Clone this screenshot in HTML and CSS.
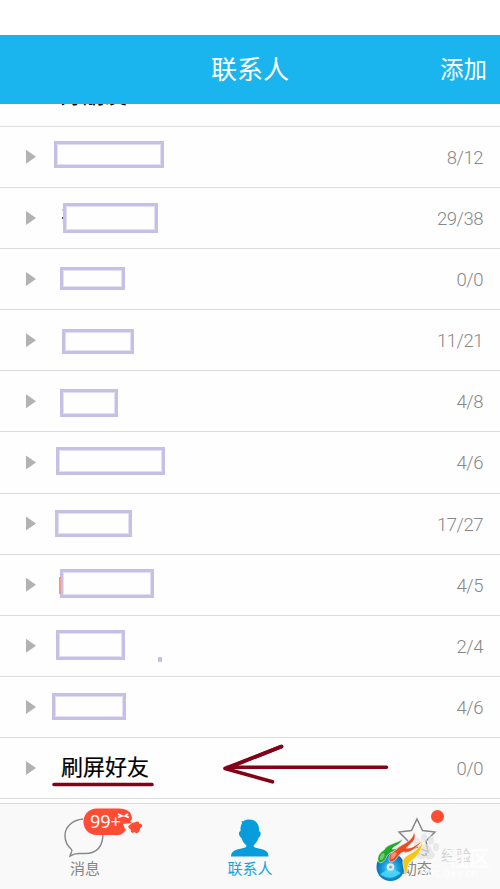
FILE: index.html
```html
<!DOCTYPE html>
<html lang="zh-CN">
<head>
<meta charset="utf-8">
<title>联系人</title>
<link rel="stylesheet" href="styles.css">
</head>
<body>
<div class="screen">
  <div class="status"></div>
  <header class="header">
    <span></span>
    <h1 class="title">联系人</h1>
    <span class="add">添加</span>
  </header>
  <main class="list">
    <div class="clipped"><span class="clipped-name">好朋友</span></div>
    <div class="row"><i class="caret"></i><span class="mask m1"></span><span class="count">8/12</span></div>
    <div class="row"><i class="caret"></i><span class="mask m2"></span><span class="count">29/38</span></div>
    <div class="row"><i class="caret"></i><span class="mask m3"></span><span class="count">0/0</span></div>
    <div class="row"><i class="caret"></i><span class="mask m4"></span><span class="count">11/21</span></div>
    <div class="row"><i class="caret"></i><span class="mask m5"></span><span class="count">4/8</span></div>
    <div class="row"><i class="caret"></i><span class="mask m6"></span><span class="count">4/6</span></div>
    <div class="row"><i class="caret"></i><span class="mask m7"></span><span class="count">17/27</span></div>
    <div class="row"><i class="caret"></i><span class="mask m8"></span><span class="count">4/5</span></div>
    <div class="row"><i class="caret"></i><span class="mask m9"></span><span class="count">2/4</span></div>
    <div class="row"><i class="caret"></i><span class="mask m10"></span><span class="count">4/6</span></div>
    <div class="row"><i class="caret"></i><span class="name">刷屏好友</span><span class="count">0/0</span>
      <svg class="arrow" viewBox="0 0 350 60" fill="none" stroke="#840218" stroke-width="3.6" stroke-linecap="round" stroke-linejoin="round">
        <path d="M4 46.500H102M336.500 29.300H177M231.500 8.500L175 30.500L222.500 43.800"/>
        <path d="M231.500 8.500L180 29"/>
      </svg>
    </div>
  </main>
  <nav class="tabs">
    <div class="tab messages">
      <svg class="icon bubble" viewBox="0 0 80 50">
        <path d="M22 15C11 16 4 23 4 31.500C4 38 7 42.500 10.500 45.500C12 47 9.500 49 9 52C12.500 50 14.500 49.500 18 49.500H24C35 49.500 42 43 42 29" fill="none" stroke="#8a8b8c" stroke-width="1.500"/>
        <path d="M36 4.500H58C66 4.500 71 8 71 15L69 17.500L71 19L75 18C75 17 79 17 78 20C82 19 82 24 79 24C79 28 76 31 73.500 28C71 30 69 28 70 26L67 23L64 27C61 30 60 31 57 31H36C18 31 18 4.500 36 4.500Z" fill="#ff4c33"/>
        <path d="M57 10L61 12L57 13.500M67 10L64 12L68 13.500" fill="none" stroke="#fff" stroke-width="1.700"/>
        <path d="M62 20L71 19L67 22.500L69 27L64 25Z" fill="#f9f9f9"/>
        <text class="badge" x="29" y="24">99+</text>
      </svg>
      <span class="label">消息</span>
    </div>
    <div class="tab contacts">
      <svg class="icon person" viewBox="0 0 40 40">
        <path d="M11.500 3L13 3.500C17 .5 24 1 27 5C29 7.500 29 10 29 13C31.500 14 31 18 28.500 20C27.500 23.500 25 26 23.500 27.500C23.500 30 27 30 31 31C36 32 38.500 34 38.500 38.500H1C1 34 4 32 9 31C13 30 16.500 30 16.500 27.500C14 25.500 12.500 23 11.500 20C8.500 18 8 14 10.500 13C10.500 10 10.500 7 12 5.500Z" fill="#079ddd"/>
      </svg>
      <span class="label">联系人</span>
    </div>
    <div class="tab moments">
      <svg class="icon star" viewBox="0 0 38 36">
        <path d="M19 1L24.500 12.500L37 14L28 23L30 34L19 29L8 34L10 23L1 14L13.500 12.500Z" fill="none" stroke="#868788" stroke-width="1.500"/>
      </svg>
      <span class="label">动态</span>
      <i class="dot"></i>
    </div>
    <svg class="watermark" viewBox="0 0 140 94">
      <defs>
        <radialGradient id="disc" cx=".5" cy=".55" r=".5"><stop offset="0" stop-color="#7ddcff"/><stop offset=".5" stop-color="#1aa5e1"/><stop offset="1" stop-color="#0870b8"/></radialGradient>
      </defs>
      <g fill="#e0e1e2" opacity=".7">
        <ellipse cx="57" cy="47" rx="3" ry="4.500"/><ellipse cx="64" cy="43" rx="3" ry="4.500"/><ellipse cx="71" cy="45" rx="3" ry="4.500"/><ellipse cx="76" cy="52" rx="3" ry="4"/>
        <path d="M66 49C71 49 71 55 74 58C77 63 70 66 65 63C60 66 54 62 57 57C60 54 61 49 66 49Z"/>
        <text class="experience" x="81" y="66">经验</text>
      </g>
      <path d="M57 58L66 61M66 61V58" stroke="#999" stroke-width="1" stroke-dasharray="3 2"/>
      <circle cx="30.500" cy="72" r="14" fill="url(#disc)"/>
      <path d="M20 79Q30 87 41 78L34 74L27 75Z" fill="#51ddf7" opacity=".8"/>
      <circle cx="30.500" cy="72" r="3.800" fill="#dceaf1"/><circle cx="30.500" cy="72" r="1.500" fill="#91a7b1"/>
      <path d="M18 66C17 60 21 57 24 55C27 49 35 49 43 44C39 51 35 50 32 54C37 55 38 51 41 51C36 58 30 56 27 61C25 67 19 70 18 66Z" fill="#20a92b" stroke="#edf8ec" stroke-width=".6"/>
      <path d="M20 65C19 61 22 58 24 58C26 61 22 66 20 65Z" fill="#75cc68"/>
      <path d="M29 65C28 59 33 57 37 54C42 48 52 48 54 37C58 45 50 49 46 53C53 54 56 49 63 46C56 52 51 59 43 57C38 59 36 67 31 67Q29 67 29 65Z" fill="#e94b20" stroke="#fff3ed" stroke-width=".6"/>
      <path d="M31 64C30 59 34 56 37 58C36 61 33 65 31 64Z" fill="#f58f79"/>
      <path d="M45 81C45 75 42 70 43 65C47 58 56 59 63 46C62 56 56 63 51 66C46 70 49 76 45 81Z" fill="#f5c612" stroke="#fffbed" stroke-width=".6"/>
      <g fill="#fff">
        <text class="community" x="88" y="71">社区</text>
        <text class="site" x="60" y="82">Bbs.0xy.cn</text>
      </g>
    </svg>
  </nav>
</div>
</body>
</html>
```
FILE: styles.css
```css
* { box-sizing: border-box; }
body { margin: 0; font-family: "Liberation Sans", "Noto Sans CJK SC", sans-serif; background: #fefefe; }
.screen { width: 500px; height: 889px; display: flex; flex-direction: column; overflow: hidden; }
.status { height: 35px; flex: none; background: #fff; }
.header { height: 69px; flex: none; background: #1ab4ee; color: #fff; display: grid; grid-template-columns: 1fr auto 1fr; align-items: center; padding: 0 13px; }
.title { margin: 0; font-size: 26px; line-height: 36px; font-weight: 400; }
.add { justify-self: end; font-size: 23.5px; line-height: 34px; }
.list { height: 699px; flex: none; padding-bottom: 4px; background: #fefefe; }
.clipped { height: 22.8px; overflow: hidden; border-bottom: 1px solid #dfdfdf; padding-left: 61px; }
.clipped-name { display: block; margin-top: -20px; font-size: 22px; line-height: 24px; }
.row { height: 61.14px; position: relative; display: flex; align-items: flex-start; border-bottom: 1px solid #dcdcdc; padding: 0 17px 0 26px; }
.caret { width: 10px; height: 14px; margin-top: 23px; background: #b2b2b2; clip-path: polygon(0 0, 100% 50%, 0 100%); }
.mask { border: 3px solid #c8bfe7; box-shadow: inset 0 0 0 1px #e3def2; position: relative; }
.m1 { margin: 14px 0 0 17.5px; width: 110.5px; height: 27px; }
.m2 { margin: 15px 0 0 27px; width: 95px; height: 30px; }
.m3 { margin: 18px 0 0 24px; width: 65px; height: 23px; }
.m4 { margin: 19px 0 0 26px; width: 71.5px; height: 25px; }
.m5 { margin: 18px 0 0 23.5px; width: 58.5px; height: 27.5px; }
.m6 { margin: 15px 0 0 19.5px; width: 109px; height: 28px; }
.m7 { margin: 16px 0 0 19px; width: 76.5px; height: 27px; }
.m8 { margin: 14px 0 0 24px; width: 94px; height: 29px; }
.m9 { margin: 14px 0 0 20px; width: 69px; height: 30px; }
.m10 { margin: 16px 0 0 16px; width: 74px; height: 27px; }
.m2::before { content: ""; position: absolute; left: -4px; top: 11px; width: 1px; height: 2px; background: #444; box-shadow: 0 -8px #ccc; }
.m8::before { content: ""; position: absolute; left: -4px; top: 5px; width: 2px; height: 17px; background: #ee9a88; }
.m9::after { content: ""; position: absolute; left: 99px; top: 24px; width: 4px; height: 5px; background: #c8bfe7; }
.name { margin: 14px 0 0 25px; font-size: 22px; line-height: 32px; color: #000; -webkit-text-stroke: .2px #000; }
.count { margin: 19px 0 0 auto; font: 300 18.5px/24px Roboto, "Liberation Sans", sans-serif; letter-spacing: -.5px; color: #888; }
.arrow { position: absolute; left: 50px; top: 0; width: 350px; height: 60px; }
.tabs { height: 86px; flex: none; position: relative; display: grid; grid-template-columns: repeat(3, 1fr); background: #f9f9f9; border-top: 1px solid #d9dadb; }
.tab { position: relative; display: flex; flex-direction: column; align-items: center; color: #858585; }
.label { font-size: 15px; line-height: 20px; }
.icon { display: block; flex: none; overflow: visible; }
.bubble { width: 80px; height: 50px; margin: 0 0 5px 35px; }
.person { width: 40px; height: 40px; margin: 14px 0 1px; }
.star { width: 38px; height: 36px; margin: 14px 0 5px; }
.contacts { color: #12a4df; }
.messages { align-items: flex-start; padding-left: 26px; }
.messages .label { margin-left: 44px; }
.badge { font: 18px "Noto Sans", sans-serif; fill: #fff; }
.dot { position: absolute; left: 98px; top: 6px; width: 13px; height: 13px; border-radius: 50%; background: #ff4c33; }
.watermark { position: absolute; left: 360px; top: -9px; width: 140px; height: 94px; }
.experience { font: 15px "Noto Sans CJK SC", sans-serif; fill: #c4c5c6; }
.community { font: bold 21px "Noto Sans CJK SC", sans-serif; opacity: .8; }
.site { font: 10px "DejaVu Sans", sans-serif; letter-spacing: .5px; }
```
